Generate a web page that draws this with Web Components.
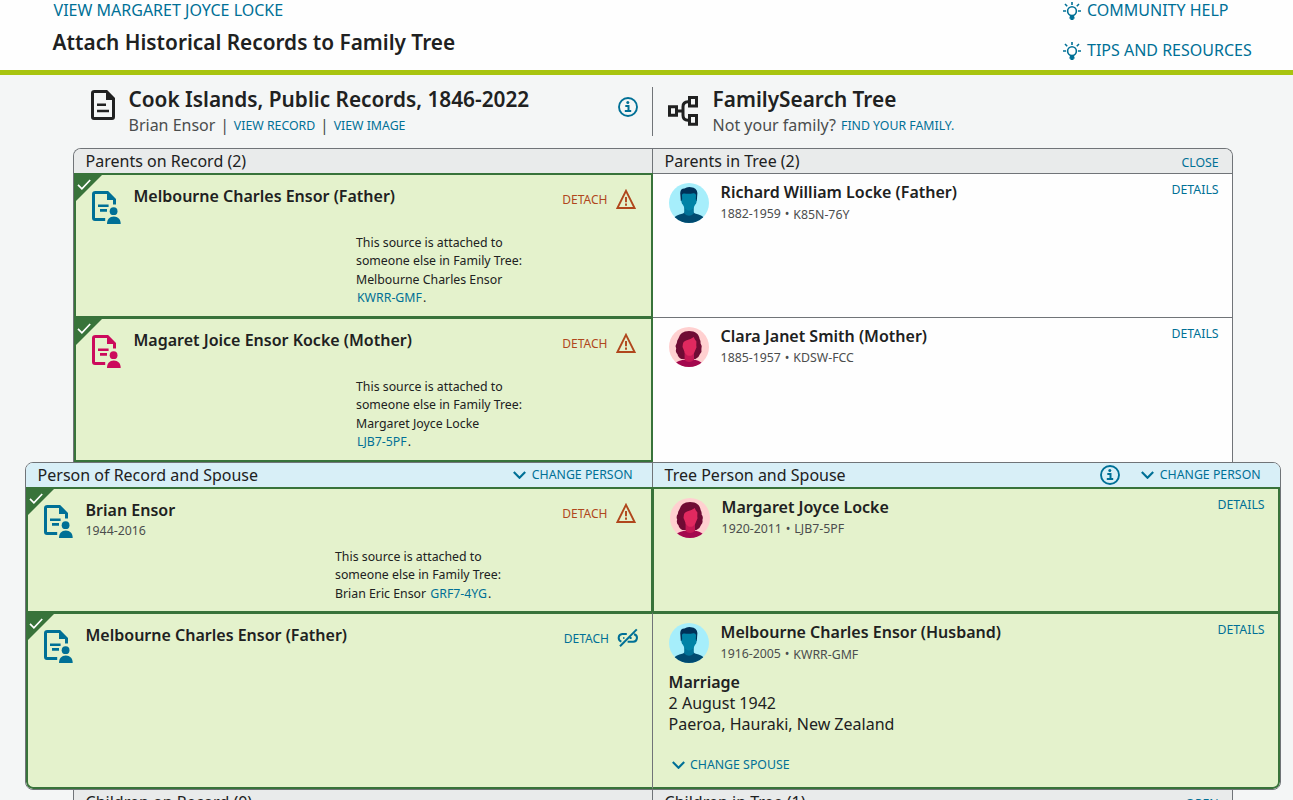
<!DOCTYPE html>
<html lang="en">
<head>
<meta charset="utf-8">
<title>Attach Historical Records to Family Tree</title>
<style>
  html, body {
    margin: 0;
    height: 800px;
    overflow: hidden;
  }
  body {
    background: #f4f6f6;
    color: #202121;
    font: 16px/22px "Noto Sans", sans-serif;
    --link: #007096;
  }
</style>
</head>
<body>
<source-linker></source-linker>

<script>
// icon shapes, keyed by name: [width, height, markup]
const ICONS = {
  bulb: [18, 18, `<g fill="none" stroke="currentColor" stroke-width="1.6">
    <circle cx="9" cy="9.1" r="4.4"/><path d="M7.4 13.2v1.2h3.2v-1.2" stroke-width="1.2"/>
    <path d="M9 0v3M0 9h3M15 9h3M2 2l2.2 2.2M16 2l-2.2 2.2M6.5 15.9h5M7.5 17.4h3"/></g>`],
  record: [24, 30, `<path d="M3.5 1.5H15.5L22.5 8.5V27Q22.5 28.5 21 28.5H3Q1.5 28.5 1.5 27V3Q1.5 1.5 3.5 1.5Z" fill="none" stroke="currentColor" stroke-width="3"/>
    <path d="M15 0.8L23.2 9V10H15Z" fill="currentColor"/>
    <path d="M6 14.7h9M6 21h12" stroke="currentColor" stroke-width="2.6"/>`],
  person: [29, 33, `<path d="M13.2 28.5H3Q1.5 28.5 1.5 27V3Q1.5 1.5 3.5 1.5H15.5L22.5 8.5V13.4" fill="none" stroke="currentColor" stroke-width="3"/>
    <path d="M15 0.8L23.2 9H15Z" fill="currentColor"/>
    <path d="M6 14.8h10.6M8 19.4h7" stroke="currentColor" stroke-width="2.6"/>
    <circle cx="21.6" cy="20.2" r="3.9" fill="currentColor"/>
    <path d="M15 33C15 28.5 17.6 25.6 21.8 25.6S28.7 28.5 28.7 33Z" fill="currentColor"/>`],
  tree: [30, 30, `<g fill="none" stroke="currentColor" stroke-width="3">
    <path d="M1.5 10.7h7v8.6h-7zM21.5 1.5h7v8.6h-7zM21.5 19.6h7v8.6h-7z"/>
    <path d="M10 15h5M20 5.8q-5 0-5 5v8.4q0 5 5 5"/></g>`],
  info: [20, 20, `<circle cx="10" cy="10" r="9" fill="none" stroke="currentColor" stroke-width="1.9"/>
    <circle cx="9.8" cy="5.6" r="1.5" fill="currentColor"/>
    <path d="M7.3 9h3.2v5M6.8 14.1h6.4" fill="none" stroke="currentColor" stroke-width="2"/>`],
  chevron: [13, 8, `<path d="M0.8 1L6.5 6.8 12.2 1" fill="none" stroke="currentColor" stroke-width="2.1"/>`],
  alert: [20, 20, `<path d="M10 1.8L18.6 19H1.4Z" fill="none" stroke="currentColor" stroke-width="1.9"/>
    <path d="M10 8v5.3M10 14.5v2.3" stroke="currentColor" stroke-width="1.9"/>`],
  unlink: [21, 20, `<g fill="none" stroke="currentColor" stroke-width="2">
    <path d="M9.8 6H5.2A3.9 3.9 0 0 0 4.4 13.6"/>
    <path d="M17 6.2A3.8 3.8 0 0 1 16 13.7H10.6"/>
    <path d="M3 18.2L19.8 1.4"/><path d="M6.2 9.9h1.2M12.6 9.9h2"/></g>`],
  check: [14, 11, `<path d="M1 5.8L4.9 9.8 13.2 1" fill="none" stroke="currentColor" stroke-width="1.7"/>`],
  male: [40, 40, `<clipPath id="c"><circle cx="20" cy="20" r="20"/></clipPath>
    <g clip-path="url(#c)"><path fill="#a6eefb" d="M0 0h40v40H0z"/>
    <path fill="#004a70" d="M4 36Q6 32 14 30.4L16 29H24L26 30.4Q34 32 36 36V40H4Z"/>
    <path fill="#007298" d="M15.2 23H24.8V30.5Q20 35 15.2 30.5Z"/>
    <path fill="#003057" d="M11.8 18L11.2 10Q11.5 5.5 15.5 5.6Q18 3.6 22 4.2Q28 4.6 28.4 10L27.8 18Z"/>
    <path fill="#0083a6" d="M13 12Q13.2 10 15.5 10.6Q20 11.2 24.5 10.2Q26.8 10 27 12L26.8 16.5Q28.2 16.5 27.4 19.5Q27 21.3 26.2 21.5Q25 25 22.5 26.8Q20 28.2 17.5 26.8Q15 25 13.8 21.5Q13 21.3 12.6 19.5Q11.8 16.5 13.2 16.5Z"/></g>`],
  female: [40, 40, `<clipPath id="c"><circle cx="20" cy="20" r="20"/></clipPath>
    <g clip-path="url(#c)"><path fill="#ffd0d0" d="M0 0h40v40H0z"/>
    <path fill="#6f0b34" d="M20 4C26.5 4 30 7 30.6 12Q32 14 31.6 16.5Q33.6 19 32.4 22Q33.2 25 31 27Q30 30.5 26.5 32H12.5Q9 30.5 8.5 27.2Q6 25 7.2 21.6Q5.8 18.5 7.8 16Q8 13 9.4 11.5Q11 4.4 20 4Z"/>
    <path fill="#a3084e" d="M3 40Q5 34.6 14 32.8H26Q33 34 36 40Z"/>
    <path fill="#c51955" d="M15.6 25H25V33Q20 37.2 15.6 33Z"/>
    <path fill="#e0295f" d="M24.8 10Q25.4 12.5 27.4 14.5L27.3 18.5Q28 20 26.8 22Q25.6 26.6 22.6 28.4Q20.3 29.4 18 28.2Q15.2 26 14.4 22Q13 20 13.8 17.6Q14 14.5 17 13.4Q21.5 12.6 24.8 10Z"/></g>`]
};

class FsIcon extends HTMLElement {
  connectedCallback() {
    const [w, h, shape] = ICONS[this.getAttribute('name')];
    this.attachShadow({ mode: 'open' }).innerHTML = `
      <style>
        :host { display: block; flex: none; width: ${w}px; height: ${h}px; }
        svg { display: block; }
      </style>
      <svg width="${w}" height="${h}" viewBox="0 0 ${w} ${h}">${shape}</svg>
    `;
  }
}

// small upper-case action, with an optional icon before or after the label
class FsAction extends HTMLElement {
  connectedCallback() {
    const icon = name => name ? `<fs-icon name="${name}"></fs-icon>` : '';
    this.attachShadow({ mode: 'open' }).innerHTML = `
      <style>
        :host {
          display: inline-flex;
          align-items: center;
          gap: var(--action-gap, 5.4px);
          color: var(--link);
          font-size: 12.32px;
          line-height: 20px;
          white-space: nowrap;
        }
        :host([tone="danger"]) { color: #b0471c; }
        :host([large]) { font-size: 16px; line-height: 22px; }
        :host([large]) fs-icon { margin-top: 2px; }
        span { padding-top: var(--label-drop, 0); }
      </style>
      ${icon(this.getAttribute('before'))}<span><slot></slot></span>${icon(this.getAttribute('after'))}
    `;
  }
}

class PageHeader extends HTMLElement {
  connectedCallback() {
    this.attachShadow({ mode: 'open' }).innerHTML = `
      <style>
        :host {
          display: flex;
          justify-content: space-between;
          box-sizing: border-box;
          height: 75px;
          padding: 0 41px 0 53px;
          background: #fefefe;
          border-bottom: 5px solid #a8c40f;
        }
        fs-action { display: flex; margin-top: -1px; --action-gap: 6px; }
        .view { margin-left: 0.6px; }
        h1 { margin: 7px 0 0 -0.4px; font-size: 20.8px; line-height: 28px; font-weight: 600; }
        .help { width: 189px; }
        .help fs-action + fs-action { margin-top: 18px; }
      </style>
      <div>
        <fs-action large class="view">VIEW MARGARET JOYCE LOCKE</fs-action>
        <h1>Attach Historical Records to Family Tree</h1>
      </div>
      <div class="help">
        <fs-action large before="bulb">COMMUNITY HELP</fs-action>
        <fs-action large before="bulb">TIPS AND RESOURCES</fs-action>
      </div>
    `;
  }
}

class SideTitle extends HTMLElement {
  connectedCallback() {
    this.attachShadow({ mode: 'open' }).innerHTML = `
      <style>
        :host { display: flex; align-items: flex-start; }
        .icon { margin-top: var(--icon-top, 3px); }
        .text { flex: 1; margin: -1px 0 0 var(--text-gap, 13.5px); white-space: nowrap; }
        h2 { margin: 0; font-size: 20.8px; line-height: 26px; font-weight: 600; }
        .sub { display: flex; align-items: center; height: 22px; line-height: 22px; margin-top: 2px; color: #4b4d4d; }
      </style>
      <fs-icon class="icon" name="${this.getAttribute('icon')}"></fs-icon>
      <div class="text">
        <h2>${this.getAttribute('heading')}</h2>
        <div class="sub"><slot></slot></div>
      </div>
      <slot name="end"></slot>
    `;
  }
}

class ComparePanel extends HTMLElement {
  connectedCallback() {
    this.attachShadow({ mode: 'open' }).innerHTML = `
      <style>
        :host {
          display: grid;
          grid-template-columns: 1fr 1fr;
          border: 1px solid #707478;
          border-bottom: 0;
          border-radius: 8px 8px 0 0;
          background: #fefefe;
          margin: 0 60px 0 73px;
          overflow: hidden;
          --head: #e9ebeb;
          --note-left: 280px;
        }
        :host([focus]) {
          margin: 0 12px 0 25px;
          border-bottom: 1px solid #707478;
          border-radius: 8px;
          --head: #d8eff7;
          --note-left: 307px;
        }
      </style>
      <slot></slot>
    `;
  }
}

class PanelHead extends HTMLElement {
  connectedCallback() {
    this.attachShadow({ mode: 'open' }).innerHTML = `
      <style>
        :host {
          display: flex;
          align-items: center;
          box-sizing: border-box;
          height: 24px;
          padding: 0 13.4px 0 11.6px;
          background: var(--head);
        }
        :host([left]) { border-right: 1px solid #707478; }
        .title { flex: 1; white-space: nowrap; }
      </style>
      <span class="title">${this.getAttribute('label')}</span>
      <slot></slot>
    `;
  }
}

class RecordCard extends HTMLElement {
  connectedCallback() {
    const warn = !this.hasAttribute('linked');
    this.attachShadow({ mode: 'open' }).innerHTML = `
      <style>
        :host {
          display: block;
          box-sizing: border-box;
          position: relative;
          z-index: 1;
          border: 2px solid #38733a;
          background: #e4f2cc;
          margin-bottom: var(--overlap, -1px);
        }
        :host([last]) { --overlap: 0; }
        :host([linked]) {
          border-right: 1px solid #707478;
          border-bottom-left-radius: 7px;
        }
        .corner {
          position: absolute;
          left: 0;
          top: 0;
          width: 26px;
          height: 26px;
          background: #38733a;
          clip-path: polygon(0 0, 100% 0, 0 100%);
          color: #fff;
        }
        .corner fs-icon { margin: 4px 0 0 1px; }
        .row {
          display: flex;
          align-items: flex-start;
          box-sizing: border-box;
          height: 59px;
          padding: 10px ${warn ? 15 : 14}px 0 16px;
        }
        .icon { margin-top: 6px; color: ${this.getAttribute('sex') === 'f' ? '#cc0a5c' : 'var(--link)'}; }
        .who { flex: 1; margin-left: 12.5px; }
        .name { font-weight: 600; }
        .dates { font-size: 12.32px; line-height: 18px; margin-top: 1px; color: #4b4d4d; }
        .row fs-action {
          margin-top: 3px;
          font-size: 12px;
          --action-gap: ${warn ? 8.6 : 8}px;
          --label-drop: 2px;
        }
        .note {
          margin-left: var(--note-left);
          font-size: 12.32px;
          line-height: 18.4px;
        }
      </style>
      <div class="corner"><fs-icon name="check"></fs-icon></div>
      <div class="row">
        <fs-icon class="icon" name="person"></fs-icon>
        <div class="who">
          <div class="name">${this.getAttribute('name')}</div>
          <div class="dates">${this.getAttribute('dates') || ''}</div>
        </div>
        <fs-action ${warn ? 'tone="danger" after="alert"' : 'after="unlink"'}>DETACH</fs-action>
      </div>
      <div class="note"><slot></slot></div>
    `;
  }
}

// the record id inside a note
class RecordId extends HTMLElement {
  connectedCallback() {
    this.attachShadow({ mode: 'open' }).innerHTML =
      '<style>:host { color: var(--link); padding: 0 1px; }</style><slot></slot>';
  }
}

class TreeCard extends HTMLElement {
  connectedCallback() {
    this.attachShadow({ mode: 'open' }).innerHTML = `
      <style>
        :host {
          display: block;
          box-sizing: border-box;
          border-top: 1px solid #707478;
        }
        :host([matched]) {
          position: relative;
          z-index: 1;
          border: 2px solid #38733a;
          background: #e4f2cc;
          margin: 0 0 -1px -1px;
        }
        :host([last]) {
          margin: 0;
          border-left: 0;
          border-bottom-right-radius: 7px;
        }
        .row { display: flex; align-items: flex-start; padding: 9px 13.4px 0 16px; }
        .who { flex: 1; margin-left: 11.6px; margin-top: -2px; }
        .name { font-weight: 600; }
        .dates { display: flex; font-size: 12.32px; line-height: 20px; color: #4b4d4d; white-space: pre; margin-top: 1px; }
        .dot { margin: 0 0.8px 0 0.6px; }
        .id { position: relative; top: var(--id-drop, 1px); }
        .row fs-action { margin-top: -3px; }
        .extra { padding-left: 15.6px; }
      </style>
      <div class="row">
        <fs-icon name="${this.getAttribute('sex') === 'f' ? 'female' : 'male'}"></fs-icon>
        <div class="who">
          <div class="name">${this.getAttribute('name')}</div>
          <div class="dates"><span>${this.getAttribute('dates')}</span><span class="dot"> • </span><span class="id">${this.getAttribute('pid')}</span></div>
        </div>
        <fs-action>DETAILS</fs-action>
      </div>
      <div class="extra"><slot></slot></div>
    `;
  }
}

class SourceLinker extends HTMLElement {
  connectedCallback() {
    this.attachShadow({ mode: 'open' }).innerHTML = `
      <style>
        :host { display: block; }
        .titles {
          display: grid;
          grid-template-columns: 580px 1fr;
          box-sizing: border-box;
          height: 73px;
          padding: 12px 60px 12px 73px;
        }
        .titles side-title:first-child { padding: 0 14px 0 18px; border-right: 1px solid #707478; height: 49px; }
        .titles side-title:last-child { padding-left: 15px; --icon-top: 9px; --text-gap: 14.6px; }
        .bar { margin: 0 4.8px; }
        .info { margin-top: 10px; color: var(--link); }
        .headinfo { color: var(--link); margin-right: 21px; }
        .view { margin-top: 1px; }
        .find { margin-left: 5px; margin-top: 2px; }
        .low { margin-top: 3px; }
        .parents { grid-template-rows: 24px 144px 145px; }
        .couple { grid-template-rows: 24px 125px 177px; }
        .children { border-top: 0; border-radius: 0; }
        .shift { margin-right: 6px; }
        .marriage { line-height: 21px; margin-top: 8px; }
        .marriage b { display: block; font-weight: 600; }
        .spouse { margin: 20px 0 0 3px; }
      </style>
      <page-header></page-header>
      <div class="titles">
        <side-title icon="record" heading="Cook Islands, Public Records, 1846-2022">
          Brian Ensor<span class="bar">|</span><fs-action class="view">VIEW RECORD</fs-action><span class="bar">|</span><fs-action class="view">VIEW IMAGE</fs-action>
          <fs-icon class="info" slot="end" name="info"></fs-icon>
        </side-title>
        <side-title icon="tree" heading="FamilySearch Tree">
          Not your family?<fs-action class="find">FIND YOUR FAMILY.</fs-action>
        </side-title>
      </div>

      <compare-panel class="parents">
        <panel-head left label="Parents on Record (2)"></panel-head>
        <panel-head label="Parents in Tree (2)"><fs-action class="low">CLOSE</fs-action></panel-head>
        <record-card name="Melbourne Charles Ensor (Father)">
          This source is attached to<br>someone else in Family Tree:<br>Melbourne Charles Ensor<br><record-id>KWRR-GMF</record-id>.
        </record-card>
        <tree-card name="Richard William Locke (Father)" dates="1882-1959" pid="K85N-76Y"></tree-card>
        <record-card last sex="f" name="Magaret Joice Ensor Kocke (Mother)">
          This source is attached to<br>someone else in Family Tree:<br>Margaret Joyce Locke<br><record-id>LJB7-5PF</record-id>.
        </record-card>
        <tree-card sex="f" name="Clara Janet Smith (Mother)" dates="1885-1957" pid="KDSW-FCC" style="--id-drop: 0"></tree-card>
      </compare-panel>

      <compare-panel focus class="couple">
        <panel-head left label="Person of Record and Spouse"><fs-action class="shift" before="chevron">CHANGE PERSON</fs-action></panel-head>
        <panel-head label="Tree Person and Spouse">
          <fs-icon class="headinfo" name="info"></fs-icon>
          <fs-action class="shift" before="chevron">CHANGE PERSON</fs-action>
        </panel-head>
        <record-card name="Brian Ensor" dates="1944-2016">
          This source is attached to<br>someone else in Family Tree:<br>Brian Eric Ensor <record-id>GRF7-4YG</record-id>.
        </record-card>
        <tree-card matched sex="f" name="Margaret Joyce Locke" dates="1920-2011" pid="LJB7-5PF" style="--id-drop: 0"></tree-card>
        <record-card linked last name="Melbourne Charles Ensor (Father)"></record-card>
        <tree-card matched last name="Melbourne Charles Ensor (Husband)" dates="1916-2005" pid="KWRR-GMF">
          <div class="marriage"><b>Marriage</b>2 August 1942<br>Paeroa, Hauraki, New Zealand</div>
          <fs-action class="spouse" before="chevron">CHANGE SPOUSE</fs-action>
        </tree-card>
      </compare-panel>

      <compare-panel class="children">
        <panel-head left label="Children on Record (0)"></panel-head>
        <panel-head label="Children in Tree (1)"><fs-action class="low">OPEN</fs-action></panel-head>
      </compare-panel>
    `;
  }
}

window.customElements.define('fs-icon', FsIcon);
window.customElements.define('fs-action', FsAction);
window.customElements.define('page-header', PageHeader);
window.customElements.define('side-title', SideTitle);
window.customElements.define('compare-panel', ComparePanel);
window.customElements.define('panel-head', PanelHead);
window.customElements.define('record-card', RecordCard);
window.customElements.define('record-id', RecordId);
window.customElements.define('tree-card', TreeCard);
window.customElements.define('source-linker', SourceLinker);
</script>
</body>
</html>
